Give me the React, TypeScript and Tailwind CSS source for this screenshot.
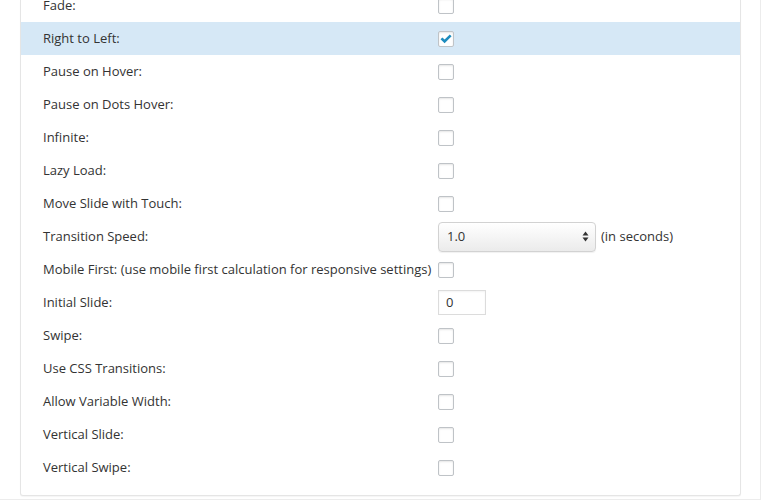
type Row = {
  label: string;
  kind: 'check' | 'select' | 'input';
  checked?: boolean;
};

const rows: Row[] = [
  { label: 'Fade:', kind: 'check' },
  { label: 'Right to Left:', kind: 'check', checked: true },
  { label: 'Pause on Hover:', kind: 'check' },
  { label: 'Pause on Dots Hover:', kind: 'check' },
  { label: 'Infinite:', kind: 'check' },
  { label: 'Lazy Load:', kind: 'check' },
  { label: 'Move Slide with Touch:', kind: 'check' },
  { label: 'Transition Speed:', kind: 'select' },
  { label: 'Mobile First: (use mobile first calculation for responsive settings)', kind: 'check' },
  { label: 'Initial Slide:', kind: 'input' },
  { label: 'Swipe:', kind: 'check' },
  { label: 'Use CSS Transitions:', kind: 'check' },
  { label: 'Allow Variable Width:', kind: 'check' },
  { label: 'Vertical Slide:', kind: 'check' },
  { label: 'Vertical Swipe:', kind: 'check' },
];

function Checkbox({ checked }: { checked?: boolean }) {
  return (
    <span className="flex h-4 w-4 items-center justify-center rounded-[2px] border border-[#bfc3c7] bg-white shadow-[inset_0_1px_2px_rgba(0,0,0,0.1)]">
      {checked ? (
        // filled tick, like the dashicons checkmark
        <svg width="12" height="10" viewBox="0 0 12 10" className="mt-[1px] text-[#1e8cbe]">
          <path d="M0.5 5.2 L2.4 3.4 L4.6 5.6 L9.8 0.4 L11.6 2.2 L4.6 9.2 Z" fill="currentColor" />
        </svg>
      ) : null}
    </span>
  );
}

function SpeedSelect() {
  return (
    <div className="flex items-center gap-[5px]">
      <div className="flex h-[30px] w-[158px] items-center justify-between rounded-[4px] border border-[#d2d2d2] bg-gradient-to-b from-white to-[#ebebeb] pl-[8px] pr-[6px] shadow-[0_1px_1px_rgba(0,0,0,0.06)]">
        <span>1.0</span>
        <svg width="7" height="11" viewBox="0 0 7 11" className="text-[#333]">
          <path d="M3.5 0.5 L6.5 4.5 L0.5 4.5 Z" fill="currentColor" />
          <path d="M3.5 10.5 L6.5 6.5 L0.5 6.5 Z" fill="currentColor" />
        </svg>
      </div>
      <span>(in seconds)</span>
    </div>
  );
}

export default function App() {
  return (
    <div className="h-[500px] w-[761px] overflow-hidden border-r border-b border-[#ececec] bg-white font-['Open_Sans',sans-serif] text-[13px] text-[#333]">
      <div className="ml-[20px] h-[496px] w-[721px] overflow-hidden rounded-b-[3px] border-x border-b border-[#e5e5e5] bg-white shadow-[0_1px_1px_rgba(0,0,0,0.04)]">
        <div className="-mt-[11px] pb-[11px]">
          {rows.map((row) => (
            <div
              key={row.label}
              className={`grid h-[33px] grid-cols-[395px_1fr] items-center pl-[22px] ${row.checked ? 'bg-[#d6e8f6]' : ''}`}
            >
              <span className="whitespace-nowrap">{row.label}</span>
              <div className="flex items-center">
                {row.kind === 'check' ? <Checkbox checked={row.checked} /> : null}
                {row.kind === 'select' ? <SpeedSelect /> : null}
                {row.kind === 'input' ? (
                  <div className="flex h-[25px] w-[48px] items-center border border-[#dcdcdc] bg-white pl-[7px] shadow-[inset_0_1px_2px_rgba(0,0,0,0.05)]">
                    0
                  </div>
                ) : null}
              </div>
            </div>
          ))}
        </div>
      </div>
    </div>
  );
}
